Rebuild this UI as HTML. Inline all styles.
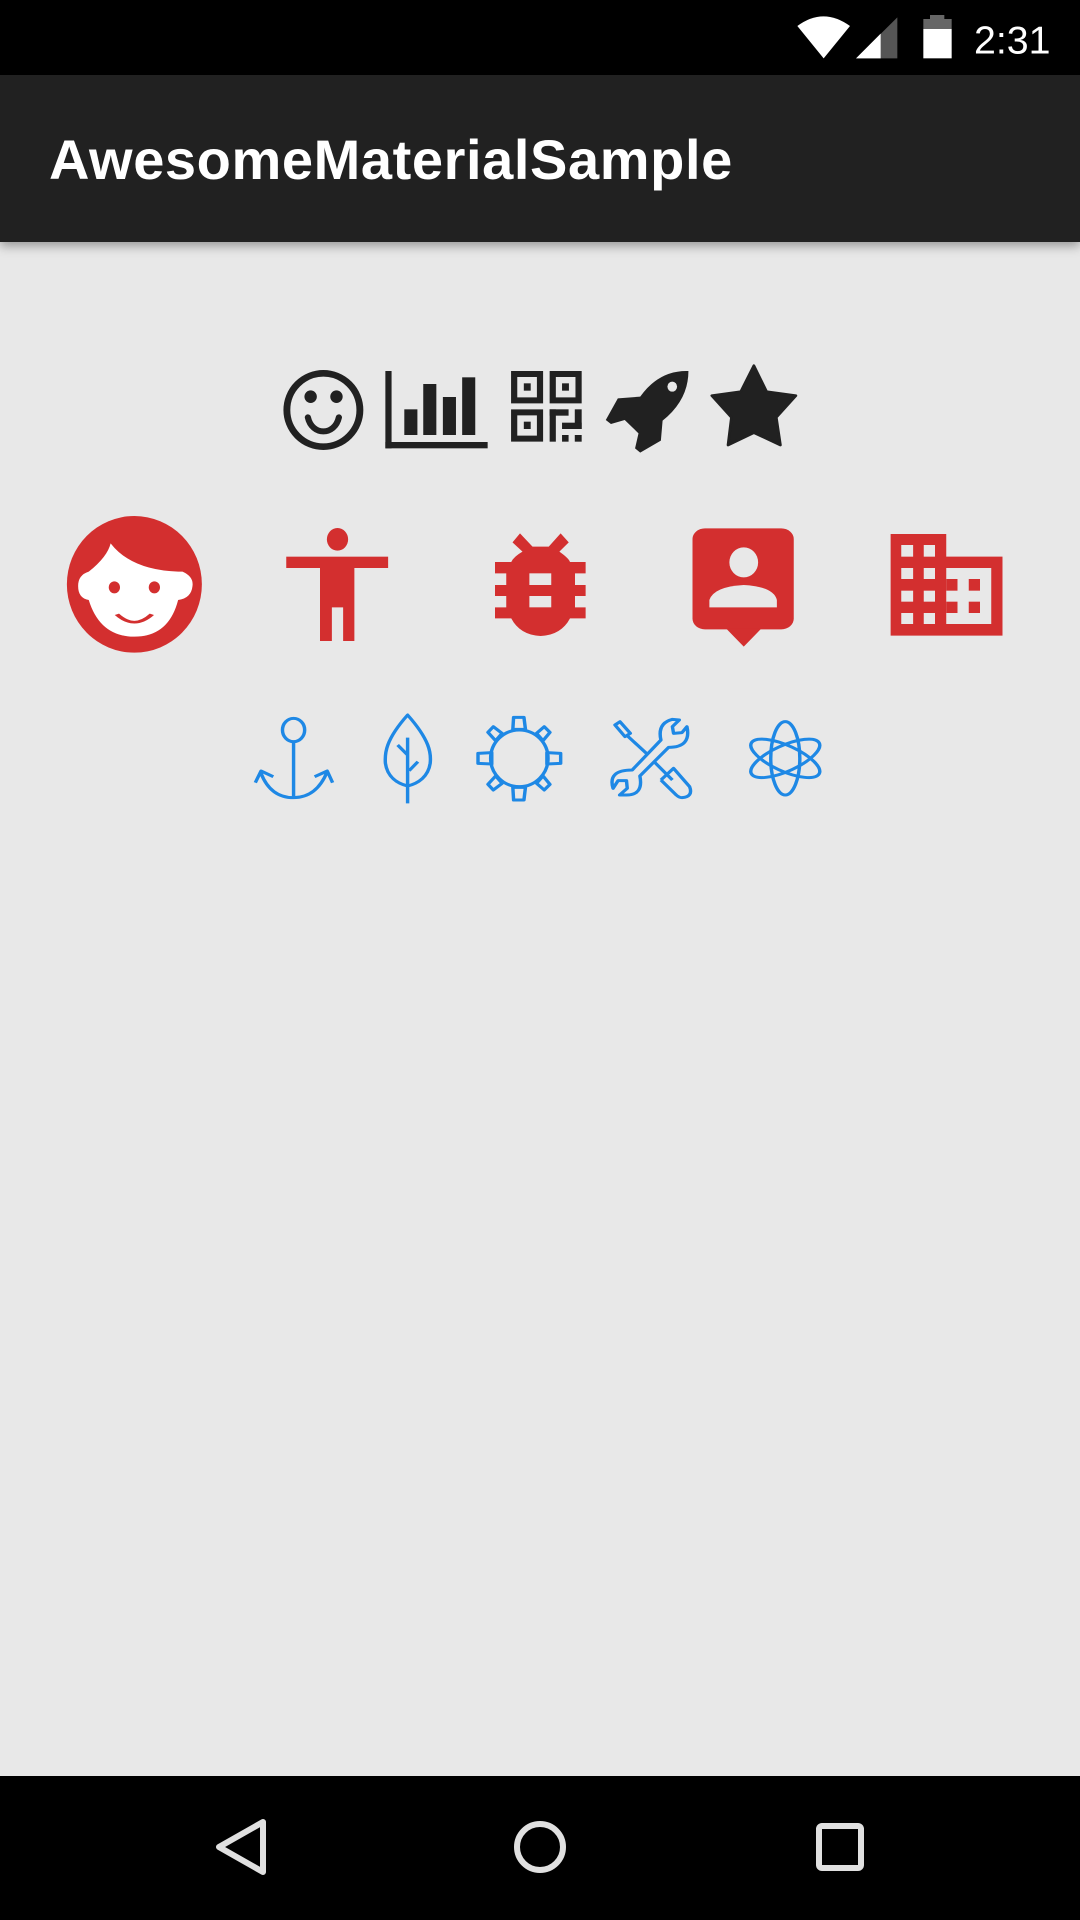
<!DOCTYPE html>
<html><head><meta charset="utf-8"><style>
html,body{margin:0;padding:0}
body{width:1080px;height:1920px;background:#e8e8e8;position:relative;overflow:hidden;font-family:"Liberation Sans",sans-serif}
.sb{position:absolute;left:0;top:0;width:1080px;height:75px;background:#000}
.ab{position:absolute;left:0;top:75px;width:1080px;height:167px;background:#212121;box-shadow:0 4px 10px rgba(0,0,0,.35)}
.ab span{position:absolute;left:49px;top:52px;font-size:56px;font-weight:bold;color:#fff;letter-spacing:0.6px}
.nb{position:absolute;left:0;top:1776px;width:1080px;height:144px;background:#000}
svg{position:absolute}
</style></head><body>
<div class="sb">
<svg style="left:780px;top:0" width="300" height="75" viewBox="0 0 900 225">
<path d="M52,78 Q130,20 210,78 L131,175 Z" fill="#fff"/>
<path d="M228,175 L352,52 L352,175 Z" fill="#555"/>
<path d="M228,175 L302,101 L302,175 Z" fill="#fff"/>
<rect x="450" y="45" width="43" height="12" fill="#666"/>
<rect x="430" y="57" width="85" height="30" fill="#666"/>
<rect x="430" y="87" width="85" height="88" fill="#fff"/>
<text x="582" y="160" font-size="118" fill="#fff" font-family="Liberation Sans">2:31</text>
</svg>
</div>
<div class="ab"><span>AwesomeMaterialSample</span></div>

<svg style="left:270px;top:350px" width="540" height="110" viewBox="0 0 1568 330" preserveAspectRatio="none">
<g fill="#212121">
<ellipse cx="155" cy="180" rx="106" ry="110" fill="none" stroke="#212121" stroke-width="20"/>
<ellipse cx="118" cy="140" rx="18" ry="19"/><ellipse cx="193" cy="140" rx="18" ry="19"/>
<path d="M110,202 C122,258 188,258 200,202" fill="none" stroke="#212121" stroke-width="18" stroke-linecap="round"/>
<rect x="335" y="63" width="18" height="232"/><rect x="335" y="276" width="297" height="19"/>
<rect x="390" y="178" width="38" height="77"/><rect x="445" y="102" width="38" height="153"/>
<rect x="502" y="141" width="38" height="114"/><rect x="558" y="82" width="38" height="173"/>
<path d="M700,63h93v97h-93z M718,81v61h57v-61z" fill-rule="evenodd"/><rect x="737" y="100" width="20" height="22"/>
<path d="M812,63h93v97h-93z M830,81v61h57v-61z" fill-rule="evenodd"/><rect x="848" y="100" width="20" height="22"/>
<path d="M700,178h93v97h-93z M718,196v61h57v-61z" fill-rule="evenodd"/><rect x="737" y="215" width="20" height="22"/>
<rect x="812" y="178" width="18" height="97"/><rect x="812" y="178" width="55" height="19"/>
<rect x="885" y="178" width="20" height="59"/><rect x="848" y="218" width="57" height="19"/>
<rect x="848" y="255" width="19" height="20"/><rect x="885" y="255" width="20" height="20"/>
<path d="M1215,63 Q1130,60 1075,140 L1010,145 L975,210 L990,222 L1030,210 L1070,250 L1060,295 L1075,308 L1135,272 L1140,212 Q1215,150 1215,63 Z"/>
<ellipse cx="1168" cy="110" rx="14" ry="15" fill="#e8e8e8"/>
<path d="M1405,47 L1442,125 L1527,137 L1470,202 L1482,285 L1405,248 L1330,285 L1340,202 L1283,137 L1367,125 Z" stroke="#212121" stroke-width="8" stroke-linejoin="round"/>
</g></svg>

<svg style="left:50px;top:500px" width="980" height="160" viewBox="0 0 1568 480" preserveAspectRatio="none">
<g fill="#d32f2f">
<ellipse cx="135" cy="253" rx="108" ry="205"/>
<path d="M97,130 Q130,210 205,215 L212,215 Q230,230 228,258 Q226,295 205,300 Q190,410 135,410 Q80,410 62,300 Q45,295 45,258 Q45,225 62,215 Q92,170 97,130 Z" fill="#fff"/>
<ellipse cx="103" cy="262" rx="9" ry="18"/><ellipse cx="167" cy="262" rx="9" ry="18"/>
<path d="M107,343 Q135,390 163,343" fill="none" stroke="#d32f2f" stroke-width="8"/>
<ellipse cx="460" cy="118" rx="17" ry="34"/>
<rect x="378" y="170" width="163" height="34"/>
<path d="M432,204 H487 V423 H469 V322 H451 V423 H432 Z"/>
<path d="M740,127 L752,100 L772,140 L798,140 L817,100 L830,127 L815,155 Q830,175 832,186 H857 V220 H840 V255 H857 V288 H840 V322 H857 V355 H832 Q818,405 785,408 Q752,405 738,355 H712 V322 H730 V288 H712 V255 H730 V220 H712 V186 H738 Q742,170 756,155 Z"/>
<rect x="767" y="220" width="35" height="35" fill="#e8e8e8"/><rect x="767" y="288" width="35" height="34" fill="#e8e8e8"/>
<rect x="1028" y="85" width="162" height="303" rx="20" ry="32"/>
<path d="M1082,386 L1110,440 L1138,386 Z"/>
<ellipse cx="1110" cy="187" rx="23" ry="45" fill="#e8e8e8"/>
<path d="M1055,322 V300 Q1062,260 1110,255 Q1158,260 1163,300 V322 Z" fill="#e8e8e8"/>
<path d="M1345,102 H1434 V170 H1524 V407 H1345 Z"/>
<g fill="#e8e8e8">
<rect x="1362" y="135" width="19" height="35"/><rect x="1398" y="135" width="18" height="35"/>
<rect x="1362" y="204" width="19" height="33"/><rect x="1398" y="204" width="18" height="33"/>
<rect x="1362" y="272" width="19" height="33"/><rect x="1398" y="272" width="18" height="33"/>
<rect x="1362" y="339" width="19" height="33"/><rect x="1398" y="339" width="18" height="33"/>
<rect x="1434" y="204" width="72" height="168"/>
</g>
<rect x="1434" y="237" width="18" height="35"/><rect x="1434" y="305" width="18" height="34"/>
<rect x="1470" y="237" width="18" height="35"/><rect x="1470" y="305" width="18" height="34"/>
</g></svg>

<svg style="left:240px;top:700px" width="600" height="110" viewBox="0 0 1568 330" preserveAspectRatio="none">
<g fill="none" stroke="#1e88e5" stroke-width="9" stroke-linejoin="round">
<ellipse cx="140" cy="90" rx="29" ry="35"/>
<path d="M140,125 V293"/>
<path d="M55,220 Q80,293 140,293 Q200,293 228,215"/>
<path d="M40,248 L55,213 L87,230 M195,230 L228,213 L242,248"/>
<path d="M438,45 C380,120 378,160 380,190 C385,230 410,250 438,258 C466,250 492,230 497,190 C500,160 496,120 438,45 Z"/>
<path d="M438,113 V310 M412,135 L438,165 M465,185 L442,212"/>
<ellipse cx="730" cy="175" rx="75" ry="85"/>
<path d="M715,52 H742 L746,88 H713 Z M713,262 H746 L742,300 H715 Z M622,160 L658,158 V192 L622,190 Z M802,158 L838,160 V190 L802,192 Z"/>
<path d="M648,97 L662,80 L685,100 L668,122 Z M795,80 L810,97 L792,122 L775,100 Z M648,253 L668,228 L685,250 L662,270 Z M792,228 L810,253 L795,270 L775,250 Z"/>
<path d="M980,75 L993,65 L1020,100 L1006,110 Z M1010,105 L1062,160"/>
<path d="M1082,185 L1130,240 M1100,240 L1133,205 L1175,260 Q1185,290 1155,293 Q1148,293 1140,285 L1100,240"/>
<path d="M1025,210 L1100,120 Q1090,70 1130,58 L1148,60 L1130,80 L1133,100 L1155,98 L1168,80 Q1180,142 1120,142 L1045,228 Q1055,285 1010,285 L992,285 L1012,265 L1010,242 L988,242 L975,265 Q960,210 1025,210 Z"/>
<ellipse cx="1425" cy="175" rx="38" ry="110"/>
<ellipse cx="1425" cy="175" rx="100" ry="38" transform="rotate(28 1425 175)"/>
<ellipse cx="1425" cy="175" rx="100" ry="38" transform="rotate(-28 1425 175)"/>
</g></svg>

<div class="nb">
<svg style="left:0;top:0" width="1080" height="144">
<path d="M263,46 L263,96 L219,71 Z" fill="none" stroke="#e0e0e0" stroke-width="6" stroke-linejoin="round"/>
<circle cx="540" cy="71" r="23" fill="none" stroke="#e0e0e0" stroke-width="6"/>
<rect x="819" y="50" width="42" height="42" rx="3" fill="none" stroke="#e0e0e0" stroke-width="6"/>
</svg>
</div>
</body></html>
